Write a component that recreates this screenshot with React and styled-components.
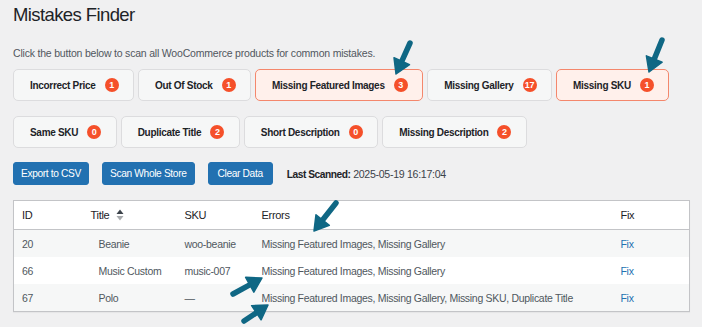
import React from 'react';
import styled, { createGlobalStyle } from 'styled-components';

const GlobalStyle = createGlobalStyle`
    html, body {
        margin: 0;
        padding: 0;
        background: #f0f0f1;
        font-family: "Liberation Sans", Arial, sans-serif;
        color: #3c434a;
    }
`;

const rowOne = [
    { label: "Incorrect Price", count: 1 },
    { label: "Out Of Stock", count: 1 },
    { label: "Missing Featured Images", count: 3, active: true },
    { label: "Missing Gallery", count: 17 },
    { label: "Missing SKU", count: 1, active: true }
];

const rowTwo = [
    { label: "Same SKU", count: 0 },
    { label: "Duplicate Title", count: 2 },
    { label: "Short Description", count: 0 },
    { label: "Missing Description", count: 2 }
];

const products = [
    { id: 20, title: "Beanie", sku: "woo-beanie", errors: "Missing Featured Images, Missing Gallery" },
    { id: 66, title: "Music Custom", sku: "music-007", errors: "Missing Featured Images, Missing Gallery" },
    { id: 67, title: "Polo", sku: "—", errors: "Missing Featured Images, Missing Gallery, Missing SKU, Duplicate Title" }
];

// arrows drawn on top of the screenshot: [tailX, tailY, tipX, tipY]
const arrows = [
    [410, 43, 396, 74],
    [662, 40, 649, 72],
    [336, 203, 314, 231],
    [233, 294, 262, 278],
    [244, 321, 268, 305]
];

const Arrow = ({ from, to }) =>
{
    const [x1, y1] = from;
    const [x2, y2] = to;
    const dx = x2 - x1;
    const dy = y2 - y1;
    const len = Math.hypot(dx, dy);
    const ux = dx / len;
    const uy = dy / len;
    const headLen = 14;
    const headW = 8.5;
    const bx = x2 - ux * headLen;
    const by = y2 - uy * headLen;
    const px = -uy * headW;
    const py = ux * headW;
    return (
        <g>
            <line x1={x1} y1={y1} x2={bx + ux * 2} y2={by + uy * 2}
                stroke="#0f6784" strokeWidth="5.5" strokeLinecap="round" />
            <polygon points={`${x2},${y2} ${bx + px},${by + py} ${bx - px},${by - py}`}
                fill="#0f6784" stroke="#0f6784" strokeWidth="1.5" strokeLinejoin="round" />
        </g>
    );
};

const App = () =>
{
    return (<Page>
        <GlobalStyle />
        <Title>Mistakes Finder</Title>
        <Intro>Click the button below to scan all WooCommerce products for common mistakes.</Intro>

        <FilterRow>
            {rowOne.map(f => (
                <Filter key={f.label} $active={f.active}>
                    {f.label}<Badge>{f.count}</Badge>
                </Filter>
            ))}
        </FilterRow>
        <FilterRow>
            {rowTwo.map(f => (
                <Filter key={f.label} $active={f.active}>
                    {f.label}<Badge>{f.count}</Badge>
                </Filter>
            ))}
        </FilterRow>

        <Actions>
            <PrimaryButton>Export to CSV</PrimaryButton>
            <PrimaryButton>Scan Whole Store</PrimaryButton>
            <PrimaryButton $wide>Clear Data</PrimaryButton>
            <Scanned><b>Last Scanned:</b> 2025-05-19 16:17:04</Scanned>
        </Actions>

        <Table>
            <colgroup>
                <col style={{ width: 69 }} />
                <col style={{ width: 94 }} />
                <col style={{ width: 77 }} />
                <col />
                <col style={{ width: 77 }} />
            </colgroup>
            <thead>
                <tr>
                    <Th>ID</Th>
                    <Th>Title <SortIcon /></Th>
                    <Th>SKU</Th>
                    <Th>Errors</Th>
                    <Th>Fix</Th>
                </tr>
            </thead>
            <tbody>
                {products.map((p, i) => (
                    <Row key={p.id} $striped={i % 2 === 0}>
                        <Td>{p.id}</Td>
                        <Td $indent>{p.title}</Td>
                        <Td>{p.sku}</Td>
                        <Td>{p.errors}</Td>
                        <Td><FixLink href="#">Fix</FixLink></Td>
                    </Row>
                ))}
            </tbody>
        </Table>

        <Overlay width="702" height="327" viewBox="0 0 702 327">
            {arrows.map((a, i) => <Arrow key={i} from={[a[0], a[1]]} to={[a[2], a[3]]} />)}
        </Overlay>
    </Page>);
};

export default App;

const SortIcon = () => (
    <svg width="8" height="12" viewBox="0 0 8 12" style={{ marginLeft: 4, verticalAlign: -2 }}>
        <polygon points="4,0.5 7.5,5 0.5,5" fill="#3c434a" />
        <polygon points="4,11.5 7.5,7 0.5,7" fill="#a7aaad" />
    </svg>
);

const Page = styled.div`
    position: relative;
    width: 702px;
    height: 327px;
    box-sizing: border-box;
    padding: 2px 12px 0 13px;
    overflow: hidden;
`;

const Title = styled.h1`
    margin: 0;
    font-size: 18.5px;
    font-weight: 400;
    letter-spacing: -0.6px;
    line-height: 26px;
    color: #1d2327;
`;

const Intro = styled.p`
    margin: 17px 0 8px;
    font-size: 10.5px;
    letter-spacing: -0.2px;
    line-height: 16px;
    color: #50575e;
`;

const FilterRow = styled.div`
    display: flex;
    gap: 4px;
    margin-bottom: 14px;
    &:first-of-type {
        margin-bottom: 15px;
    }
`;

const Filter = styled.button`
    display: flex;
    align-items: center;
    gap: 9px;
    height: 32px;
    box-sizing: border-box;
    padding: 0 14.5px 0 16px;
    border-radius: 5px;
    border: 1.5px solid ${p => p.$active ? '#f4876c' : '#dcdcde'};
    background: ${p => p.$active ? '#fff0eb' : '#f6f7f7'};
    font-family: inherit;
    font-size: 10px;
    font-weight: 700;
    letter-spacing: -0.3px;
    color: #1d2327;
    white-space: nowrap;
    cursor: pointer;
`;

const Badge = styled.span`
    display: inline-flex;
    align-items: center;
    justify-content: center;
    min-width: 14px;
    height: 14px;
    padding: 0 2px;
    box-sizing: border-box;
    border-radius: 7px;
    background: #f5502a;
    color: #fff;
    font-size: 9px;
    font-weight: 700;
    letter-spacing: -0.2px;
    line-height: 1;
`;

const Actions = styled.div`
    display: flex;
    align-items: center;
    gap: 13px;
    margin-bottom: 15px;
`;

const PrimaryButton = styled.button`
    height: 23px;
    padding: 0 ${p => p.$wide ? '9px' : '7px'};
    border: 1px solid #2271b1;
    border-radius: 3px;
    background: #2271b1;
    color: #fff;
    font-family: inherit;
    font-size: 10.2px;
    letter-spacing: -0.35px;
    white-space: nowrap;
    cursor: pointer;
`;

const Scanned = styled.span`
    margin-left: 1px;
    font-size: 10.6px;
    letter-spacing: -0.3px;
    color: #3c434a;
    b {
        font-size: 10.2px;
        font-weight: 700;
        letter-spacing: -0.45px;
        color: #1d2327;
    }
`;

const Table = styled.table`
    width: 677px;
    border-collapse: collapse;
    table-layout: fixed;
    background: #fff;
    border: 1px solid #c3c4c7;
    box-shadow: 0 1px 1px rgba(0, 0, 0, 0.04);
`;

const Th = styled.th`
    height: 28px;
    padding: 0 8px;
    text-align: left;
    font-size: 11px;
    font-weight: 400;
    letter-spacing: -0.3px;
    color: #1d2327;
    border-bottom: 1px solid #c3c4c7;
`;

const Row = styled.tr`
    background: ${p => p.$striped ? '#f6f7f7' : '#fff'};
`;

const Td = styled.td`
    height: 27px;
    padding: 0 8px 0 ${p => p.$indent ? '16px' : '8px'};
    font-size: 10.5px;
    letter-spacing: -0.3px;
    color: #50575e;
    white-space: nowrap;
`;

const FixLink = styled.a`
    color: #2271b1;
    text-decoration: none;
`;

const Overlay = styled.svg`
    position: absolute;
    top: 0;
    left: 0;
    pointer-events: none;
`;
